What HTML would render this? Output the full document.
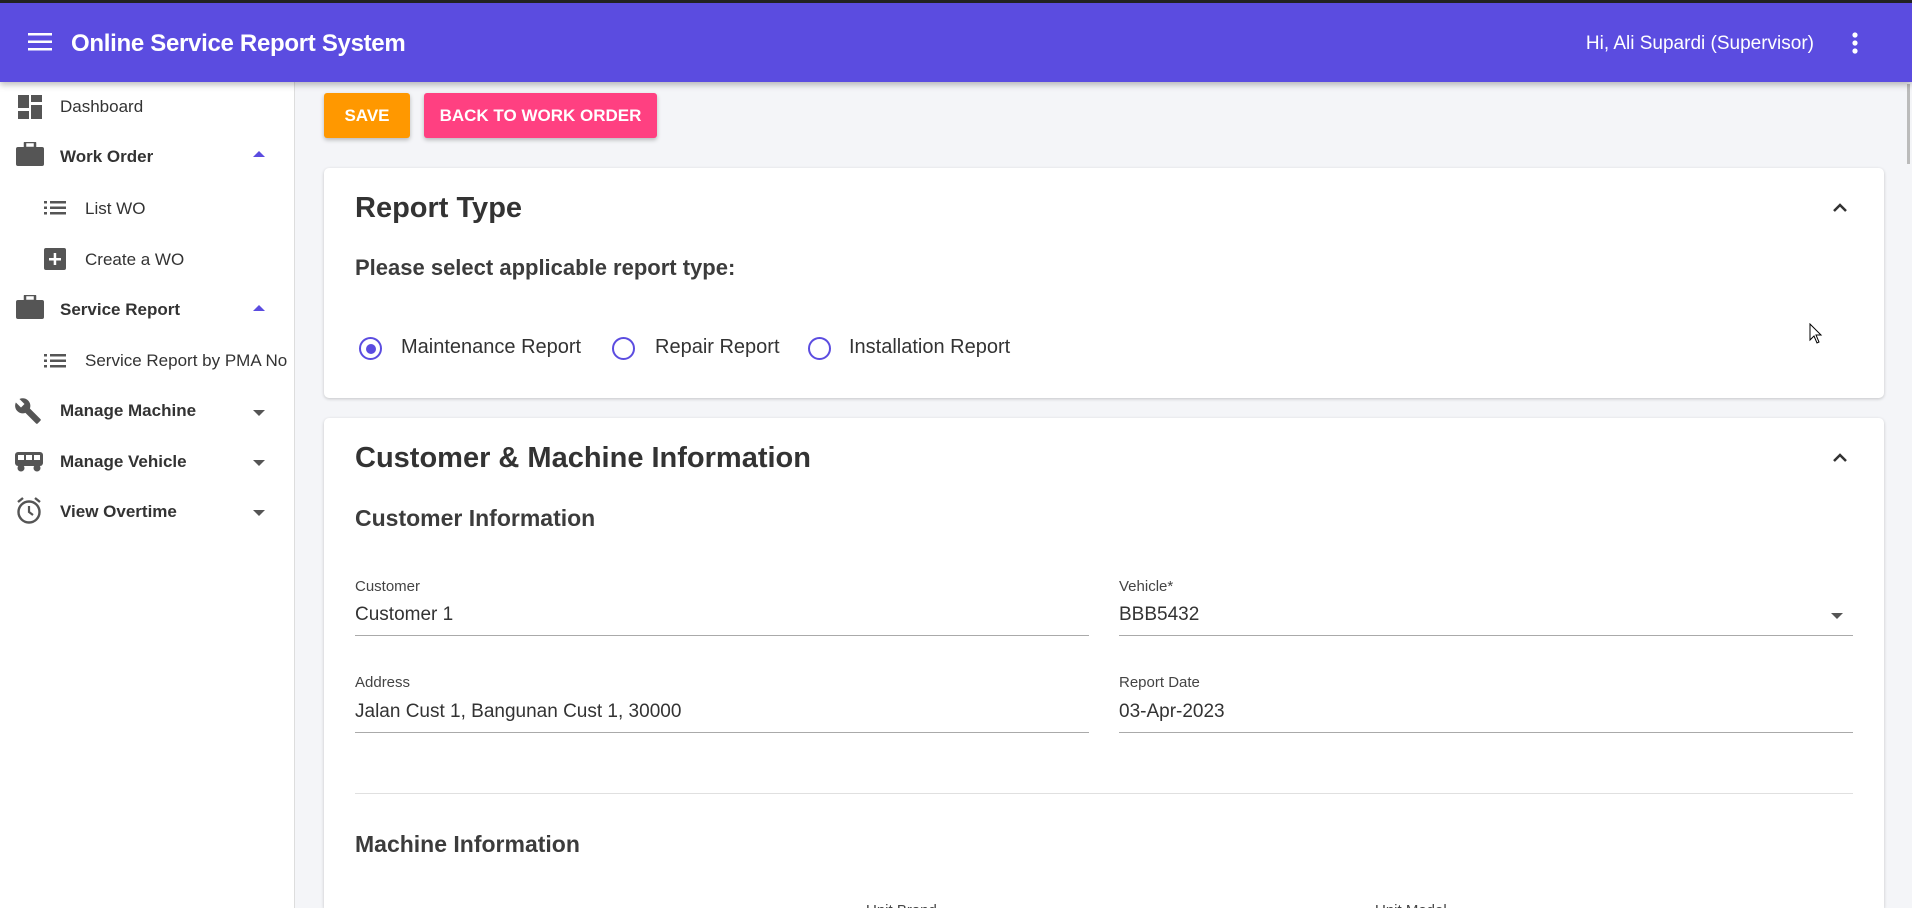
<!DOCTYPE html>
<html style="overflow:hidden;height:908px"><head><meta charset="utf-8"><style>
*{box-sizing:border-box;margin:0;padding:0}
body{width:1912px;height:908px;overflow:hidden;background:#f4f5f8;font-family:"Liberation Sans",sans-serif;color:#3c3c3c;position:relative}
.hdr{position:absolute;left:0;top:0;width:1912px;height:82px;background:#5b4ce0;border-top:3px solid #222;box-shadow:0 3px 6px rgba(0,0,0,.25);z-index:2}
.hdr .t{position:absolute;left:71px;top:27px;color:#fff;font-size:24px;font-weight:bold;letter-spacing:-0.3px}
.hdr .u{position:absolute;right:98px;top:30px;color:#fff;font-size:19px}
.side{position:absolute;left:0;top:82px;width:295px;height:826px;background:#fff;border-right:1px solid #ddd}
.it{position:absolute;font-size:17px;color:#333}
.b{font-weight:bold;color:#333}
.ic{position:absolute}
.arr{position:absolute;left:253px;width:0;height:0;border-left:6px solid transparent;border-right:6px solid transparent}
.up{border-bottom:6px solid #5b4ce0}
.dn{border-top:6px solid #555}
.btn{position:absolute;top:93px;height:45px;color:#fff;font-weight:bold;font-size:17px;line-height:45px;text-align:center;border-radius:3px;box-shadow:0 2px 4px rgba(0,0,0,.25)}
.card{position:absolute;left:324px;width:1560px;background:#fff;border-radius:5px;box-shadow:0 1px 3px rgba(0,0,0,.2)}
.h1{position:absolute;font-size:29px;font-weight:bold;color:#333}
.h2{position:absolute;font-size:23px;font-weight:bold;color:#3c3c3c}
.rad{position:absolute;top:337px;width:23px;height:23px;border:2px solid #5b4ce0;border-radius:50%}
.rl{position:absolute;top:336px;font-size:20px;color:#333}
.lab{position:absolute;font-size:15px;color:#444}
.val{position:absolute;font-size:19px;color:#333}
.ln{position:absolute;height:1px;background:#aaa}
</style></head><body>
<div class="hdr">
<svg style="position:absolute;left:28px;top:30px" width="24" height="18"><rect y="0" width="24" height="2.5" fill="#fff"/><rect y="7.5" width="24" height="2.5" fill="#fff"/><rect y="15" width="24" height="2.5" fill="#fff"/></svg>
<div class="t">Online Service Report System</div>
<div class="u">Hi, Ali Supardi (Supervisor)</div>
<svg style="position:absolute;left:1851px;top:29px" width="8" height="22"><circle cx="4" cy="3" r="2.6" fill="#fff"/><circle cx="4" cy="11" r="2.6" fill="#fff"/><circle cx="4" cy="19" r="2.6" fill="#fff"/></svg>
</div>
<div class="side"></div>
<svg class="ic" style="left:18px;top:95px" width="24" height="24"><rect x="0" y="0" width="11" height="13" fill="#555"/><rect x="13" y="0" width="11" height="7" fill="#555"/><rect x="13" y="10" width="11" height="14" fill="#555"/><rect x="0" y="16" width="11" height="8" fill="#555"/></svg>
<div class="it" style="left:60px;top:97px">Dashboard</div>
<svg class="ic" style="left:16px;top:142px" width="28" height="24"><rect x="9" y="0" width="10" height="6" rx="1" fill="none" stroke="#555" stroke-width="2.5"/><rect x="0" y="5" width="28" height="19" rx="2" fill="#555"/></svg>
<div class="it b" style="left:60px;top:147px">Work Order</div><div class="arr up" style="top:151px"></div>
<svg class="ic" style="left:44px;top:201px" width="22" height="14"><g fill="#555"><rect width="3" height="2.5"/><rect y="5.5" width="3" height="2.5"/><rect y="11" width="3" height="2.5"/><rect x="6" width="16" height="2.5"/><rect x="6" y="5.5" width="16" height="2.5"/><rect x="6" y="11" width="16" height="2.5"/></g></svg>
<div class="it" style="left:85px;top:199px">List WO</div>
<svg class="ic" style="left:44px;top:248px" width="22" height="22"><rect width="22" height="22" rx="2" fill="#555"/><rect x="5" y="10" width="12" height="2.5" fill="#fff"/><rect x="9.7" y="5" width="2.5" height="12" fill="#fff"/></svg>
<div class="it" style="left:85px;top:250px">Create a WO</div>
<svg class="ic" style="left:16px;top:295px" width="28" height="24"><rect x="9" y="0" width="10" height="6" rx="1" fill="none" stroke="#555" stroke-width="2.5"/><rect x="0" y="5" width="28" height="19" rx="2" fill="#555"/></svg>
<div class="it b" style="left:60px;top:300px">Service Report</div><div class="arr up" style="top:305px"></div>
<svg class="ic" style="left:44px;top:354px" width="22" height="14"><g fill="#555"><rect width="3" height="2.5"/><rect y="5.5" width="3" height="2.5"/><rect y="11" width="3" height="2.5"/><rect x="6" width="16" height="2.5"/><rect x="6" y="5.5" width="16" height="2.5"/><rect x="6" y="11" width="16" height="2.5"/></g></svg>
<div class="it" style="left:85px;top:351px">Service Report by PMA No</div>
<svg class="ic" style="left:14px;top:397px" width="28" height="28" viewBox="0 0 24 24"><path fill="#555" d="M22.7 19l-9.1-9.1c.9-2.3.4-5-1.5-6.9-2-2-5-2.4-7.4-1.3L9 6 6 9 1.6 4.7C.4 7.1.9 10.1 2.9 12.1c1.900 1.9 4.6 2.4 6.9 1.5l9.1 9.1c.4.4 1 .4 1.4 0l2.3-2.3c.5-.4.5-1.1.1-1.4z"/></svg>
<div class="it b" style="left:60px;top:401px">Manage Machine</div><div class="arr dn" style="top:410px"></div>
<svg class="ic" style="left:14px;top:451px" width="30" height="22"><rect x="1" y="1" width="28" height="14" rx="3" fill="#555"/><rect x="4" y="4" width="6" height="5" fill="#fff"/><rect x="12" y="4" width="6" height="5" fill="#fff"/><rect x="20" y="4" width="6" height="5" fill="#fff"/><circle cx="7" cy="17" r="3.5" fill="#555"/><circle cx="23" cy="17" r="3.5" fill="#555"/></svg>
<div class="it b" style="left:60px;top:452px">Manage Vehicle</div><div class="arr dn" style="top:460px"></div>
<svg class="ic" style="left:16px;top:497px" width="26" height="28" viewBox="0 0 26 28"><circle cx="13" cy="15" r="10.5" fill="none" stroke="#555" stroke-width="2.4"/><path d="M13 9v6l4 3" fill="none" stroke="#555" stroke-width="2.2"/><path d="M2 5l5-4M24 5l-5-4" stroke="#555" stroke-width="2.4"/></svg>
<div class="it b" style="left:60px;top:502px">View Overtime</div><div class="arr dn" style="top:510px"></div>
<div class="btn" style="left:324px;width:86px;background:#ff9800">SAVE</div>
<div class="btn" style="left:424px;width:233px;background:#ff4081">BACK TO WORK ORDER</div>
<div class="card" style="top:168px;height:230px"></div>
<div class="h1" style="left:355px;top:192px">Report Type</div>
<svg style="position:absolute;left:1832px;top:202px" width="16" height="11"><path d="M2 9l6-6 6 6" fill="none" stroke="#333" stroke-width="2.5"/></svg>
<div class="h2" style="left:355px;top:255px;font-size:22px">Please select applicable report type:</div>
<div class="rad" style="left:359px"><div style="position:absolute;left:4.5px;top:4.5px;width:10px;height:10px;border-radius:50%;background:#5b4ce0"></div></div>
<div class="rl" style="left:401px">Maintenance Report</div>
<div class="rad" style="left:612px"></div><div class="rl" style="left:655px">Repair Report</div>
<div class="rad" style="left:808px"></div><div class="rl" style="left:849px">Installation Report</div>
<svg style="position:absolute;left:1809px;top:323px" width="14" height="22"><path d="M1 1v16l4-4 3 7 2-1-3-7h5z" fill="#fff" stroke="#000" stroke-width="1"/></svg>
<div class="card" style="top:418px;height:490px;border-radius:5px 5px 0 0"></div>
<div class="h1" style="left:355px;top:442px">Customer &amp; Machine Information</div>
<svg style="position:absolute;left:1832px;top:452px" width="16" height="11"><path d="M2 9l6-6 6 6" fill="none" stroke="#333" stroke-width="2.5"/></svg>
<div class="h2" style="left:355px;top:505px">Customer Information</div>
<div class="lab" style="left:355px;top:578px">Customer</div>
<div class="val" style="left:355px;top:604px">Customer 1</div>
<div class="ln" style="left:355px;top:635px;width:734px"></div>
<div class="lab" style="left:1119px;top:578px">Vehicle*</div>
<div class="val" style="left:1119px;top:604px">BBB5432</div>
<div class="arr dn" style="left:1831px;top:613px"></div>
<div class="ln" style="left:1119px;top:635px;width:734px"></div>
<div class="lab" style="left:355px;top:674px">Address</div>
<div class="val" style="left:355px;top:701px">Jalan Cust 1, Bangunan Cust 1, 30000</div>
<div class="ln" style="left:355px;top:732px;width:734px"></div>
<div class="lab" style="left:1119px;top:674px">Report Date</div>
<div class="val" style="left:1119px;top:701px">03-Apr-2023</div>
<div class="ln" style="left:1119px;top:732px;width:734px"></div>
<div class="ln" style="left:355px;top:793px;width:1498px;background:#e0e0e0"></div>
<div class="h2" style="left:355px;top:831px">Machine Information</div>
<div class="lab" style="left:866px;top:902px">Unit Brand</div>
<div class="lab" style="left:1375px;top:902px">Unit Model</div>
<div style="position:absolute;left:1907px;top:84px;width:3px;height:80px;background:#bbb"></div>
</body></html>
